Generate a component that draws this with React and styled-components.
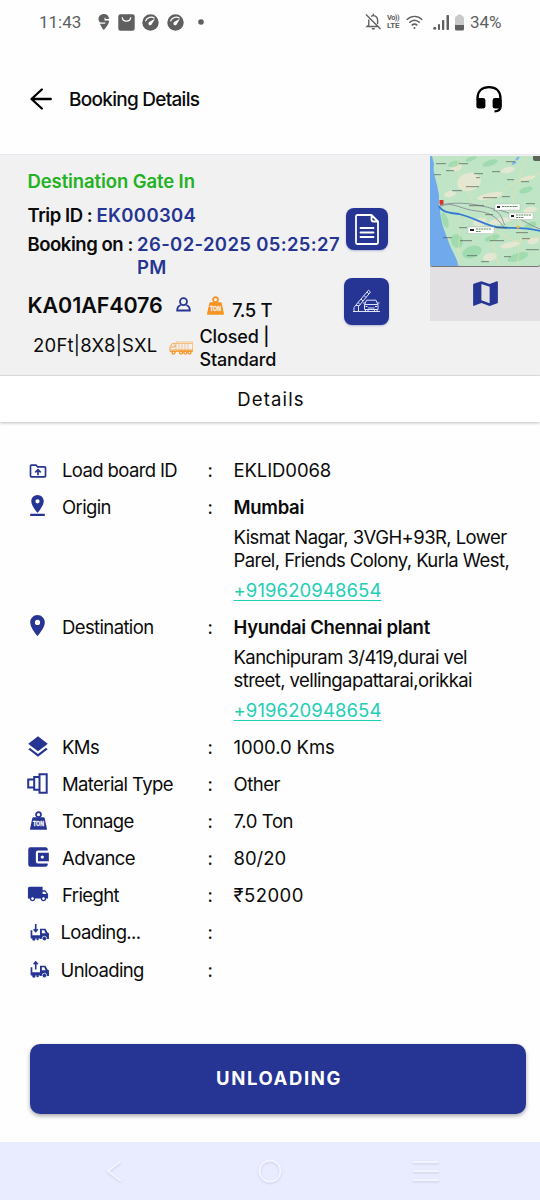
import React from "react";
import styled, { createGlobalStyle } from "styled-components";
import {
  MdPinDrop,
  MdLocationOn,
  MdLayers,
  MdAccountBalanceWallet,
  MdLocalShipping,
  MdMap,
  MdOutlineDriveFolderUpload,
} from "react-icons/md";

const NAVY = "#263593";
const ORANGE = "#f7931e";
const GREY = "#5f5f5f";

const GlobalStyle = createGlobalStyle`
  * { box-sizing: border-box; }
  body { margin: 0; background: #fefefe; font-family: Inter, "Liberation Sans", sans-serif; color: #0b0b0b; }
  svg { display: block; flex: none; }
`;

const Screen = styled.div`
  width: 540px;
  height: 1200px;
  display: flex;
  flex-direction: column;
  overflow: hidden;
`;

/* Status bar */
const StatusBar = styled.div`
  height: 44px;
  flex: none;
  display: flex;
  justify-content: space-between;
  align-items: center;
  padding: 0 39px 0 39px;
  font-family: Roboto, sans-serif;
  font-size: 17px;
  color: ${GREY};
`;
const StatusGroup = styled.div`
  display: flex;
  align-items: center;
  gap: ${(p) => p.$gap}px;
`;
const Clock = styled.span`
  width: 49px;
  margin-right: 2px;
`;
const Percent = styled.span`
  width: 31px;
  letter-spacing: -0.1px;
  margin-left: 1px;
  white-space: nowrap;
`;
const Volte = styled.span`
  display: flex;
  flex-direction: column;
  gap: 0;
  width: 14px;
  font-weight: 700;
  line-height: 8px;
  white-space: nowrap;
`;
const VolteTop = styled.span`
  font-size: 7.5px;
  letter-spacing: -0.55px;
`;
const VolteBottom = styled.span`
  font-size: 8px;
  letter-spacing: -0.2px;
`;

/* App bar */
const AppBar = styled.header`
  height: 110px;
  flex: none;
  display: flex;
  align-items: center;
  padding: 0 37px 0 30px;
`;
const Title = styled.h1`
  flex: 1;
  margin: 0 0 0 17px;
  font-size: 19px;
  font-weight: 500;
  letter-spacing: -0.73px;
`;

/* Trip summary */
const Summary = styled.section`
  height: 222px;
  flex: none;
  display: flex;
  background: #f1f1f1;
  border-top: 1px solid #e7e7ef;
  border-bottom: 1px solid #e2e2e2;
`;
const TripInfo = styled.div`
  width: 344px;
  padding: 15px 0 0 27.5px;
  display: flex;
  flex-direction: column;
`;
const Status = styled.div`
  font-size: 18.5px;
  line-height: 23px;
  font-weight: 600;
  letter-spacing: -0.1px;
  color: #22b222;
  margin-bottom: 11px;
`;
const Field = styled.div`
  display: flex;
  gap: 4.2px;
  font-size: 18.5px;
  line-height: 23px;
  font-weight: 600;
  margin-bottom: ${(p) => p.$after}px;
  white-space: nowrap;
`;
const FieldLabel = styled.span`
  letter-spacing: -0.45px;
`;
const FieldValue = styled.span`
  color: ${NAVY};
  white-space: pre-line;
  letter-spacing: 0.34px;
`;
const VehicleRow = styled.div`
  display: flex;
  align-items: center;
  height: ${(p) => p.$height}px;
  white-space: nowrap;
`;
const Plate = styled.span`
  width: 148.5px;
  font-size: 21.5px;
  font-weight: 600;
  letter-spacing: -0.1px;
  margin-top: -2px;
`;
const PersonSlot = styled.span`
  margin-top: -3px;
`;
const WeightIcon = styled.span`
  margin: -2px 0 0 15.5px;
`;
const Weight = styled.span`
  font-size: 18.5px;
  letter-spacing: -0.4px;
  font-weight: 450;
  margin: 7px 0 0 8.5px;
`;
const Size = styled.span`
  width: 135.5px;
  margin: -2px 0 0 5.5px;
  font-size: 18.5px;
  letter-spacing: 0.22px;
`;
const LorrySlot = styled.span`
  padding-top: 4px;
`;
const BodyType = styled.span`
  margin: 4px 0 0 7px;
  font-size: 18px;
  line-height: 23px;
  font-weight: 450;
  letter-spacing: -0.15px;
  white-space: pre-line;
`;
const Actions = styled.div`
  width: 86px;
  padding-top: 53px;
  display: flex;
  flex-direction: column;
  gap: 27.5px;
`;
const ActionButton = styled.button`
  width: ${(p) => p.$w}px;
  height: ${(p) => p.$h}px;
  margin: 0 ${(p) => p.$inset}px;
  padding: 0;
  border: 0;
  border-radius: 8px;
  background: ${NAVY};
  display: flex;
  align-items: center;
  justify-content: center;
  box-shadow: 0 1px 2px rgba(38, 53, 147, 0.3);
`;
const MapCard = styled.div`
  width: 110px;
  height: 165px;
  margin-top: 1px;
  background: #e2e0e2;
`;
const MapFooter = styled.div`
  height: 52px;
  display: flex;
  align-items: center;
  justify-content: center;
  color: ${NAVY};
`;

/* Section tab */
const SectionTitle = styled.h2`
  height: 46px;
  flex: none;
  margin: 0;
  display: flex;
  align-items: center;
  justify-content: center;
  padding-left: 2px;
  font-size: 18.5px;
  font-weight: 400;
  letter-spacing: 1.15px;
  background: #fff;
  box-shadow: 0 1px 3px rgba(0, 0, 0, 0.25);
`;

/* Detail list */
const DetailList = styled.div`
  flex: 1;
  padding-top: 30px;
`;
const DetailRow = styled.div`
  display: flex;
  padding: 7px 20px 7px 28px;
  margin-top: ${(p) => p.$before || 0}px;
  font-size: 18.5px;
  line-height: 23px;
`;
const IconCell = styled.span`
  width: ${(p) => (p.$narrow ? 32.5 : 34)}px;
  height: 23px;
  padding-left: ${(p) => p.$inset || 0}px;
  display: flex;
  align-items: center;
  color: ${NAVY};
`;
const IconShift = styled.span`
  margin: 0 ${(p) => -p.$bleed || 0}px;
  padding-bottom: ${(p) => p.$lift || 0}px;
`;
const Label = styled.span`
  width: ${(p) => (p.$narrow ? 147 : 145.5)}px;
  letter-spacing: -0.62px;
`;
const Colon = styled.span`
  width: 26px;
`;
const Value = styled.div`
  flex: 1;
  display: flex;
  flex-direction: column;
  align-items: flex-start;
  gap: 7px;
  letter-spacing: ${(p) => p.$track || 0}px;
`;
const Place = styled.span`
  font-weight: 600;
  letter-spacing: -0.3px;
`;
const Address = styled.span`
  white-space: pre;
  letter-spacing: -0.57px;
`;
const Phone = styled.a`
  color: #1fcfb4;
  letter-spacing: 0.1px;
  text-decoration: underline;
  text-decoration-thickness: 1px;
  text-underline-offset: 3px;
`;

/* Bottom */
const PrimaryButton = styled.button`
  width: 496px;
  height: 70px;
  flex: none;
  margin: 0 0 28px 30px;
  padding: 0 0 2px 2px;
  border: 0;
  border-radius: 10px;
  background: ${NAVY};
  color: #fff;
  font: 700 18.5px Inter, sans-serif;
  letter-spacing: 1.6px;
  box-shadow: 0 2px 4px rgba(0, 0, 0, 0.35);
`;
const NavBar = styled.nav`
  height: 58px;
  flex: none;
  display: flex;
  align-items: center;
  justify-content: space-between;
  padding: 0 101px 0 105px;
  background: #e9ebff;
  color: #f3f4ff;
`;
const NavIcon = styled.svg`
  filter: drop-shadow(0 1px 1px rgba(120, 120, 160, 0.25));
  margin-left: ${(p) => p.$before || 0}px;
`;

const Gauge = () => (
  <svg width="17" height="17" viewBox="0 0 17 17">
    <circle cx="8.5" cy="8.5" r="8.2" fill={GREY} />
    <path d="M3.4 7.2C5 2.9 10 2.2 12.5 4.3" fill="none" stroke="#fff" strokeWidth="1.2" />
    <path d="M13 4.7 9.9 10.1A1.8 1.8 0 1 1 7.5 7.8z" fill="#fff" />
  </svg>
);

const Swiggy = () => (
  <svg width="12" height="16" viewBox="0 0 12 16">
    <path d="M6 0C2.7 0 .5 2.2.5 5c0 1.7.8 3 2.300 3.500h4.600c.5.700 0 1.200-.9 1.200H2C3 12.500 4.800 15 5.800 16c2.400-2.600 4.700-5.600 5.200-8.200.2-1-.3-1.400-1.200-1.400H6.500V3.800h1v1.300h3.400C11.100 2.200 9 0 6 0z" fill={GREY} />
  </svg>
);

const Bag = () => (
  <svg width="17" height="17" viewBox="0 0 17 17">
    <rect x=".3" y=".3" width="16.4" height="16.4" rx="2.2" fill={GREY} />
    <path d="M4.3 3.2c.3 5.2 8.1 5.2 8.4 0" fill="none" stroke="#fff" strokeWidth="1.3" />
  </svg>
);

const MoreDot = () => (
  <svg width="18" height="6" viewBox="0 0 18 6">
    <circle cx="9" cy="3" r="2.8" fill={GREY} />
  </svg>
);

const BellOff = () => (
  <svg width="17" height="18" viewBox="0 0 17 18" fill="none" stroke={GREY} strokeWidth="1.4">
    <path d="M1 1.500 15.500 16M3.800 6.500V12L2.200 13.500H12.500M6 3.300C9 1.600 12.600 3.300 12.600 7v4M8.300.7v2M6.800 15.700h3" />
  </svg>
);

const Wifi = () => (
  <svg width="17" height="15" viewBox="0 0 17 15" fill="none" stroke={GREY} strokeWidth="1.5">
    <path d="M.7 4.700C5.500.3 11.500.3 16.300 4.700M3.300 7.600c3.200-2.900 7.200-2.900 10.400 0M5.700 10.300c1.800-1.500 3.800-1.500 5.600 0" />
    <circle cx="8.5" cy="13.1" r="1" fill={GREY} stroke="none" />
  </svg>
);

const Signal = () => (
  <svg width="17" height="15" viewBox="0 0 17 15" fill={GREY}>
    <circle cx="1.7" cy="13.3" r="1.5" />
    <rect x="5" y="9" width="2" height="6" rx=".8" />
    <rect x="9" y="5" width="2.3" height="10" rx=".8" />
    <rect x="13.5" y="0" width="2.5" height="15" rx=".8" />
  </svg>
);

const Battery = () => (
  <svg width="9" height="17" viewBox="0 0 9 17">
    <path d="M2 2Q2 .5 3.500.5h2Q7 .5 7 2q2 0 2 2.200V11H0V4.200Q0 2 2 2z" fill="#c9c9c9" />
    <path d="M0 11h9v4q0 1.500-1.500 1.500h-6Q0 16.500 0 15z" fill={GREY} />
  </svg>
);

const BackArrow = () => (
  <svg width="22" height="22" viewBox="0 0 22 22" fill="none" stroke="#000" strokeWidth="2.3" strokeLinecap="round" strokeLinejoin="round">
    <path d="M20.800 11H1.800M11.800 1.500 1.500 11l10.300 9.500" />
  </svg>
);

const Headset = () => (
  <svg width="28" height="28" viewBox="0 0 28 28">
    <path d="M2.500 15v-1.500C2.500 6 7 2.200 14 2.200S25.500 6 25.500 13.500v8c0 3-1.500 4.800-6 4.800" fill="none" stroke="#000" strokeWidth="2.3" />
    <rect x="1.4" y="13" width="9" height="10.6" rx="2.4" />
    <rect x="17.6" y="13" width="9" height="10.6" rx="2.4" />
  </svg>
);

const Person = () => (
  <svg width="15" height="15" viewBox="0 0 15 15" fill="none" stroke={NAVY} strokeWidth="1.8">
    <circle cx="7.5" cy="4.6" r="3.5" />
    <path d="M4.700 8.200C2.200 9 1.200 10.500 1.200 13.500h12.600c0-3-1-4.500-3.500-5.300" />
  </svg>
);

const TonText = styled.text`
  font-family: "Liberation Sans", sans-serif;
  font-size: 6.5px;
  font-weight: 700;
`;
const Ton = ({ color, back }) => (
  <svg width="17" height="19" viewBox="0 0 17 19" overflow="visible">
    <circle cx="8.5" cy="3.6" r="2.5" fill="none" stroke={color} strokeWidth="1.7" />
    <path d="M3.400 6.300h10.200q.9 0 1.100.9L17 18q.1.800-.7.800H.7Q-.1 18.800 0 18L2.300 7.200q.2-.9 1.100-.9z" fill={color} />
    <TonText x="3" y="15" textLength="11" lengthAdjust="spacingAndGlyphs" fill={back} stroke={back} strokeWidth=".3">TON</TonText>
  </svg>
);

const Lorry = () => (
  <svg width="24" height="14" viewBox="0 0 24 14" fill="none" stroke={ORANGE} strokeWidth=".8">
    <path d="M7 1h16.500v8.500H7zM7 2.500h16M10 2.500v6M13 2.500v6M16 2.500v6M19 2.500v6" opacity=".6" />
    <path d="M6.500 2.700H3L1 6v4.500h22.500V9H1M2 6h4V3.700" />
    <g fill="#f1f1f1" strokeWidth="1.3">
      <circle cx="4.5" cy="11.6" r="1.5" />
      <circle cx="12" cy="11.6" r="1.5" />
      <circle cx="16.3" cy="11.6" r="1.5" />
      <circle cx="20.5" cy="11.6" r="1.5" />
    </g>
  </svg>
);

const DocumentIcon = () => (
  <svg width="24" height="31" viewBox="0 0 24 31" fill="none" stroke="#fff" strokeWidth="1.8" strokeLinejoin="round" strokeLinecap="round">
    <path d="M2.500 1h14L23 7.500v21q0 1.500-1.500 1.500h-19Q1 30 1 28.500v-26Q1 1 2.500 1zM16.500 1v4.500q0 2 2 2H23M5.500 14h13M5.500 18.500h13M5.500 23h13" />
  </svg>
);

const GateIcon = () => (
  <svg width="27" height="24" viewBox="0 0 27 24" fill="none" stroke="#dfe3ff" strokeWidth="1">
    <path d="M0 22.500h27M1 22.500v-4l1.500-2h3v6M2.500 16.500l13-15.300 2 1.800L6 17M5 13.500l2 2M8 10l2 2M11 6.500l2 2M14 3l2 2" />
    <path d="M11.500 16l2-4.800h9.500l2 4.800v4.500h-13.500zM11.500 15.500h13.500M10 14h2M24.500 14h2M12.500 20.500v2h2.500v-2M21.500 20.500v2H24v-2M15 19h6.500M12.500 17.500h2M22 17.500h2" />
  </svg>
);

const Material = () => (
  <svg width="21" height="21" viewBox="0 0 21 21" fill="none" stroke={NAVY} strokeWidth="2">
    <path d="M12.500 1.200h7.200v18.500h-7.200zM12.500 4H7.200v12.800h5.300M7.200 6.500H1.200v8h6" />
  </svg>
);

const TruckTransfer = ({ up }) => (
  <svg width="19" height="17" viewBox="0 0 20 18" fill={NAVY}>
    <path
      d={up ? "M6 9V1M3.800 3.500 6 1l2.200 2.500" : "M6 0v8M3.800 5.500 6 8l2.200-2.500"}
      fill="none"
      stroke={NAVY}
      strokeWidth="1.700"
    />
    <path d="M1.500 6.500V15M1 12.700h9.500M1 14.500h9.500" fill="none" stroke={NAVY} strokeWidth="1.800" />
    <path fillRule="evenodd" d="M10.500 5h5.800l2.200 4 1.500.8v6h-9.500zM12.500 6.700v3h4l-1.500-3z" />
    <circle cx="4" cy="16" r="1.800" />
    <circle cx="8" cy="16" r="1.300" />
    <circle cx="15.200" cy="15.400" r="2.400" stroke="#fefefe" strokeWidth=".8" />
  </svg>
);

const townMarks = [
  [6, 7, 10], [4, 18, 7], [16, 14, 8], [29, 7, 9], [44, 17, 9], [46, 21, 4], [22, 34, 10],
  [36, 30, 13], [53, 41, 14], [72, 40, 8], [77, 23, 7], [91, 25, 8], [96, 47, 9], [62, 15, 8],
  [39, 49, 15], [29, 71, 8], [13, 81, 9], [30, 84, 12], [60, 84, 14], [37, 99, 10], [51, 105, 8],
  [96, 93, 13], [86, 76, 12], [66, 71, 11], [76, 5, 9], [55, 58, 8], [92, 82, 8], [74, 100, 7],
];
const greens = [
  [41, 3, 6, 2], [60, 7, 8, 3], [24, 8, 6, 3], [96, 34, 7, 3], [15, 64, 3, 8],
  [27, 85, 6, 7], [42, 96, 10, 6], [62, 82, 8, 3], [88, 101, 11, 4], [101, 69, 6, 3],
];
const sands = [
  [39, 26, 12, 9], [26, 11, 6, 4], [78, 14, 7, 3], [60, 40, 13, 3], [20, 38, 6, 3], [98, 22, 8, 2],
  [70, 65, 12, 3], [50, 66, 7, 4], [80, 89, 10, 3], [103, 85, 6, 3], [60, 101, 7, 4], [100, 54, 7, 3],
];

const RouteMap = () => (
  <svg width="110" height="111" viewBox="0 0 110 111">
    <rect y="1" width="110" height="110" rx="2" fill="#777" />
    <rect width="110" height="110" rx="2" fill="#bfe5c6" />
    <g fill="#ebe8d5" opacity=".85">
      {sands.map(([x, y, rx, ry]) => (
        <ellipse key={`${x}-${y}`} cx={x} cy={y} rx={rx} ry={ry} transform={`rotate(-12 ${x} ${y})`} />
      ))}
    </g>
    <g fill="#94d8a8" opacity=".7">
      {greens.map(([x, y, rx, ry]) => (
        <ellipse key={`${x}-${y}`} cx={x} cy={y} rx={rx} ry={ry} transform={`rotate(-18 ${x} ${y})`} />
      ))}
    </g>
    <path d="M2 0H0v108q0 2 2 2h27c-3-10-8-16-11-26-4-10-8-21-8-31-2-7 0-12-2-19C7 26 2 16 4 8z" fill="#71a9ed" />
    <path d="M86 4l3-3M82 8l4-2" stroke="#7fb0ec" strokeWidth="2" />
    <path d="M26 0c6 15 0 22 8 31s7 19 20 27l8 25 7 27M110 17 80 29 54 50M60 72l25 13 25-4M96 0 83 42l9 30-5 38M30 62l-2 48" fill="none" stroke="#f0dfa9" strokeWidth=".6" />
    <path d="M10 49c20-4 36-1 54 4 19 3 28 13 46 20M11 50c12-5 21 4 36 5 14 2 18 5 27 16M63 54c9 2 9 11 12 15" fill="none" stroke="#8f969d" strokeWidth="1" />
    <path d="M9 50c3 6 10 7 20 8 16 4 24 10 37 13 15 2 25-1 44 4" fill="none" stroke="#347bd1" strokeWidth="1.8" />
    <g fill="#4c534d" opacity=".55">
      {townMarks.map(([x, y, w]) => (
        <rect key={`${x}-${y}`} x={x} y={y} width={w} height="1.2" />
      ))}
    </g>
    <g fill="#fff" stroke="#aaa" strokeWidth=".4">
      <rect x="65" y="48" width="25" height="6" />
      <rect x="79" y="57" width="24" height="6.5" />
      <rect x="38" y="71" width="26" height="6.5" />
    </g>
    <path d="M67 51h3M81 60h3M40 74h4" stroke="#222" strokeWidth="2" />
    <path d="M72 50.500h16M86 59h15M46 73h15M86 61.500h8M46 75.500h5" stroke="#5d8754" strokeWidth="1" strokeDasharray="2 .6" />
    <path d="M9.500 44h4v4h-1.500l-1 2-1-2h-.5z" fill="#d9342b" />
    <circle cx="88" cy="71" r="1.6" fill="#f2b72c" />
    <path d="M103 0h7v5h-5q-2 0-2-2z" fill="#596559" />
  </svg>
);

const details = [
  { label: "Load board ID", value: "EKLID0068", track: -0.1, icon: <MdOutlineDriveFolderUpload size={20} /> },
  {
    label: "Origin",
    icon: <IconShift $bleed={3} $lift={4}><MdPinDrop size={25} /></IconShift>,
    place: "Mumbai",
    address: "Kismat Nagar, 3VGH+93R, Lower\nParel, Friends Colony, Kurla West,",
    phone: "+919620948654",
  },
  {
    label: "Destination",
    icon: <IconShift $bleed={3} $lift={4}><MdLocationOn size={25} /></IconShift>,
    place: "Hyundai Chennai plant",
    address: "Kanchipuram 3/419,durai vel\nstreet, vellingapattarai,orikkai",
    phone: "+919620948654",
  },
  { label: "KMs", value: "1000.0 Kms", track: -0.1, icon: <IconShift $bleed={3} $lift={2}><MdLayers size={26} /></IconShift> },
  { label: "Material Type", value: "Other", track: -0.5, icon: <IconShift $bleed={1} $lift={3}><Material /></IconShift> },
  { label: "Tonnage", value: "7.0 Ton", track: -0.4, inset: 1.5, icon: <IconShift $lift={2}><Ton color={NAVY} back="#fff" /></IconShift> },
  { label: "Advance", value: "80/20", icon: <IconShift $bleed={3.5} $lift={3}><MdAccountBalanceWallet size={26} /></IconShift> },
  { label: "Frieght", value: "₹52000", track: 0.45, icon: <IconShift $bleed={1} $lift={3}><MdLocalShipping size={22} /></IconShift> },
  { label: "Loading...", narrow: true, inset: 2, icon: <IconShift $lift={1}><TruckTransfer /></IconShift> },
  { label: "Unloading", narrow: true, inset: 2, before: 1, icon: <IconShift $lift={2}><TruckTransfer up /></IconShift> },
];

export default function App() {
  return (
    <Screen>
      <GlobalStyle />
      <StatusBar>
        <StatusGroup $gap={7.8}>
          <Clock>11:43</Clock>
          <Swiggy />
          <Bag />
          <Gauge />
          <Gauge />
          <MoreDot />
        </StatusGroup>
        <StatusGroup $gap={5}>
          <BellOff />
          <Volte>
            <VolteTop>Vo))</VolteTop>
            <VolteBottom>LTE</VolteBottom>
          </Volte>
          <Wifi />
          <span />
          <Signal />
          <Battery />
          <Percent>34%</Percent>
        </StatusGroup>
      </StatusBar>

      <AppBar>
        <BackArrow />
        <Title>Booking Details</Title>
        <Headset />
      </AppBar>

      <Summary>
        <TripInfo>
          <Status>Destination Gate In</Status>
          <Field $after={6}>
            <FieldLabel>Trip ID :</FieldLabel>
            <FieldValue>EK000304</FieldValue>
          </Field>
          <Field $after={14}>
            <FieldLabel>Booking on :</FieldLabel>
            <FieldValue>{"26-02-2025 05:25:27\nPM"}</FieldValue>
          </Field>
          <VehicleRow $height={26}>
            <Plate>KA01AF4076</Plate>
            <PersonSlot><Person /></PersonSlot>
            <WeightIcon><Ton color={ORANGE} back="#f1f1f1" /></WeightIcon>
            <Weight>7.5 T</Weight>
          </VehicleRow>
          <VehicleRow $height={54}>
            <Size>20Ft|8X8|SXL</Size>
            <LorrySlot><Lorry /></LorrySlot>
            <BodyType>{"Closed |\nStandard"}</BodyType>
          </VehicleRow>
        </TripInfo>
        <Actions>
          <ActionButton $w={42} $h={42} $inset={1.5}><DocumentIcon /></ActionButton>
          <ActionButton $w={45} $h={47} $inset={0}><GateIcon /></ActionButton>
        </Actions>
        <MapCard>
          <RouteMap />
          <MapFooter><MdMap size={33} /></MapFooter>
        </MapCard>
      </Summary>

      <SectionTitle>Details</SectionTitle>

      <DetailList>
        {details.map((d) => (
          <DetailRow key={d.label} $before={d.before}>
            <IconCell $narrow={d.narrow} $inset={d.inset}>{d.icon}</IconCell>
            <Label $narrow={d.narrow}>{d.label}</Label>
            <Colon>:</Colon>
            <Value $track={d.track}>
              {d.value}
              {d.place && <Place>{d.place}</Place>}
              {d.address && <Address>{d.address}</Address>}
              {d.phone && <Phone>{d.phone}</Phone>}
            </Value>
          </DetailRow>
        ))}
      </DetailList>

      <PrimaryButton>UNLOADING</PrimaryButton>

      <NavBar>
        <NavIcon width="17" height="22" viewBox="0 0 17 22" fill="none" stroke="currentColor" strokeWidth="2">
          <path d="M16 1 3 11l13 10" />
        </NavIcon>
        <NavIcon $before={5} width="24" height="24" viewBox="0 0 24 24" fill="none" stroke="currentColor" strokeWidth="2">
          <circle cx="12" cy="12" r="10.5" />
        </NavIcon>
        <NavIcon width="26" height="22" viewBox="0 0 26 22" fill="none" stroke="currentColor" strokeWidth="2">
          <path d="M0 2h26M0 11h26M0 20h26" />
        </NavIcon>
      </NavBar>
    </Screen>
  );
}
